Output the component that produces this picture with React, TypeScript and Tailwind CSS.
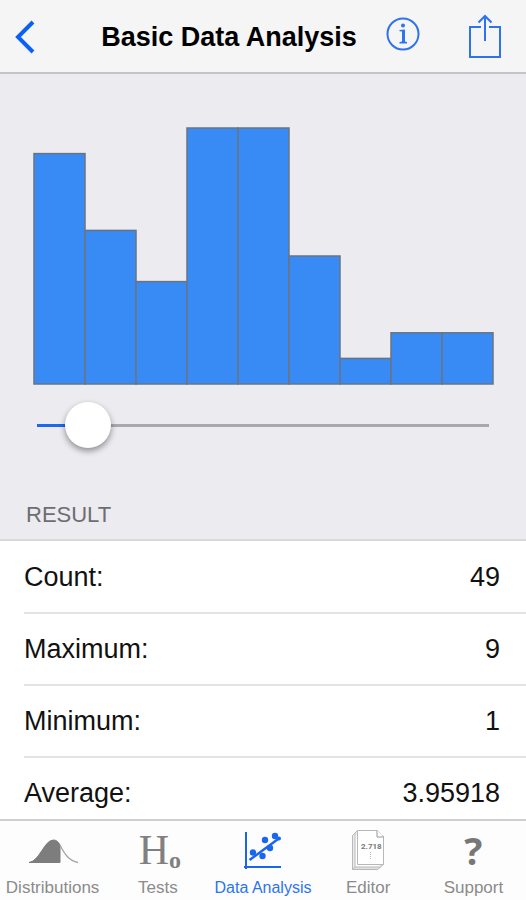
import React, { useState } from 'react';

const bins = [9, 6, 4, 10, 10, 5, 1, 2, 2];

const results = [
  { label: 'Count:', value: '49' },
  { label: 'Maximum:', value: '9' },
  { label: 'Minimum:', value: '1' },
  { label: 'Average:', value: '3.95918' },
];

function DistributionsIcon() {
  return (
    <svg width="50" height="40" viewBox="0 0 50 40" fill="none">
      <path d="M1 32.500C12 31 16 10 25.500 10C28.500 10 30.500 12 32 15V32.500Z" fill="#7d7d7d" stroke="#7d7d7d" />
      <path d="M32 15C37 25 41 30.500 50 32.500" stroke="#a3a3a3" strokeWidth="1.300" />
    </svg>
  );
}

function TestsIcon() {
  return (
    <span aria-hidden="true" className="flex items-baseline pl-1 font-['Liberation_Serif',serif] text-[#808080]">
      <span className="text-[42px] leading-10">H</span>
      <span className="relative top-1 text-[24px] leading-6 font-bold">o</span>
    </span>
  );
}

function DataAnalysisIcon() {
  return (
    <svg width="40" height="40" viewBox="0 0 40 40" fill="none" stroke="#1a66f0">
      <path d="M3 2V39M1 37H38" strokeWidth="2" />
      <path d="M6.500 30L36.500 8" strokeWidth="2.500" />
      <g fill="#1a66f0" stroke="none">
        <circle cx="10" cy="22.500" r="3.200" />
        <circle cx="19.500" cy="26" r="3.200" />
        <circle cx="22" cy="10" r="3.200" />
        <circle cx="27" cy="18" r="3.200" />
        <circle cx="32" cy="6" r="3.200" />
        <circle cx="36" cy="8.500" r="2" />
      </g>
    </svg>
  );
}

function EditorIcon() {
  return (
    <svg width="34" height="42" viewBox="0 0 34 42" fill="#fff" stroke="#b8b8b8">
      <path d="M1.500 6.500V40.500H26.500L32.500 35.500V7Z" fill="#e2e2e2" />
      <path d="M6.500 1.500L1.500 6.500V40.500L6.500 35.500Z" fill="#ececec" />
      <path d="M4 4V38H29.500" />
      <path d="M6.500 1.500H26L32.500 8V35.500H6.500Z" />
      <path d="M26 1.500V8H32.500" stroke="#999" />
      <text x="10" y="20" fontSize="8" fontWeight="bold" fill="#777" stroke="none" fontFamily="Roboto, sans-serif">2.718</text>
      <path d="M19.500 23V30" strokeDasharray="1 1" />
    </svg>
  );
}

function SupportIcon() {
  return (
    <span aria-hidden="true" className="font-['Open_Sans',sans-serif] text-[38px] leading-10 font-bold text-[#777]">?</span>
  );
}

const tabs = [
  { name: 'Distributions', icon: DistributionsIcon },
  { name: 'Tests', icon: TestsIcon },
  { name: 'Data Analysis', icon: DataAnalysisIcon },
  { name: 'Editor', icon: EditorIcon },
  { name: 'Support', icon: SupportIcon },
];

function Header() {
  return (
    <header className="flex h-[74px] shrink-0 items-center border-b-2 border-[#c4c4c8] bg-[#f5f5f5] px-3">
      <button aria-label="Back" className="w-[78px]">
        <svg width="24" height="36" viewBox="0 0 24 36" fill="none" stroke="#0a62f5" strokeWidth="4">
          <path d="M21 4L6 19L21 34" />
        </svg>
      </button>
      <h1 className="flex-1 pt-0.5 text-center text-[27px] leading-8 font-bold whitespace-nowrap text-black">Basic Data Analysis</h1>
      <div className="flex w-[146px] items-center justify-end gap-12 pr-3">
        <button aria-label="Information" className="pb-1">
          <svg width="34" height="34" viewBox="0 0 34 34" fill="none" stroke="#2e73ee">
            <circle cx="17" cy="17" r="15.500" strokeWidth="2" />
            <g fill="#2e73ee" stroke="none">
              <circle cx="17" cy="8.500" r="2" />
              <path d="M13.500 13L19 12.500V24.500L21 25V26.500H13.500V25L16 24.500V14.500L13.500 14.200Z" />
            </g>
          </svg>
        </button>
        <button aria-label="Share">
          <svg width="34" height="46" viewBox="0 0 34 46" fill="none" stroke="#2e73ee" strokeWidth="2">
            <path d="M13 14H2V44H32V14H21M17 28V3M10.500 9.500L17 3L23.500 9.500" />
          </svg>
        </button>
      </div>
    </header>
  );
}

function Histogram() {
  return (
    <svg
      role="img"
      aria-label="Histogram"
      viewBox="0 0 462 260"
      className="mx-8 mt-[52px]"
      fill="#388af5"
      stroke="#697482"
      strokeWidth="1.500"
    >
      {bins.map((n, i) => (
        <rect key={i} x={2 + i * 51} y={258 - n * 25.6} width={51} height={n * 25.6} />
      ))}
    </svg>
  );
}

function BinSlider() {
  const [value, setValue] = useState(7);
  return (
    <input
      type="range"
      aria-label="Bin width"
      min={0}
      max={100}
      value={value}
      onChange={(e) => setValue(Number(e.target.value))}
      className="mx-[37px] mt-[15px] h-12 appearance-none bg-transparent bg-size-[100%_3px] bg-center bg-no-repeat outline-none [&::-webkit-slider-thumb]:size-[46px] [&::-webkit-slider-thumb]:appearance-none [&::-webkit-slider-thumb]:rounded-full [&::-webkit-slider-thumb]:bg-white [&::-webkit-slider-thumb]:shadow-[0_3px_6px_rgba(0,0,0,0.4)]"
      style={{ backgroundImage: `linear-gradient(to right, #1c68f0 ${value + 4}%, #a9a9ab ${value + 4}%)` }}
    />
  );
}

function TabBar() {
  const [active, setActive] = useState('Data Analysis');
  return (
    <nav className="flex h-[81px] shrink-0 border-t-2 border-[#cfcfcf] bg-[#fdfdfd]">
      {tabs.map(({ name, icon: Icon }) => (
        <button
          key={name}
          onClick={() => setActive(name)}
          className={`flex flex-1 basis-0 flex-col items-center pt-1.5 whitespace-nowrap ${
            active === name ? 'text-[16px] text-[#2c74f0]' : 'text-[17px] text-[#8b8b8b]'
          }`}
        >
          <span className="flex h-[46px] items-center justify-center">
            <Icon />
          </span>
          <span className="mt-1 leading-6">{name}</span>
        </button>
      ))}
    </nav>
  );
}

export default function App() {
  return (
    <div className="flex h-screen flex-col bg-white font-['Liberation_Sans',Arial,sans-serif]">
      <Header />
      <main className="flex-1 overflow-y-auto [scrollbar-width:none]">
        <section className="flex flex-col border-b-2 border-[#d9d9dd] bg-[#ebebf0]">
          <Histogram />
          <BinSlider />
          <h2 className="mt-13 mb-2.5 pl-[26px] text-[22px] leading-7 text-[#6d6d72]">RESULT</h2>
        </section>
        <div className="pl-6">
          <table className="w-full text-[27px] leading-8 text-[#111]">
            <tbody>
              {results.map((row) => (
                <tr key={row.label} className="h-18 border-b-2 border-[#e3e3e5]">
                  <th scope="row" className="text-left font-normal">{row.label}</th>
                  <td className="pr-[26px] text-right">{row.value}</td>
                </tr>
              ))}
            </tbody>
          </table>
        </div>
      </main>
      <TabBar />
    </div>
  );
}
